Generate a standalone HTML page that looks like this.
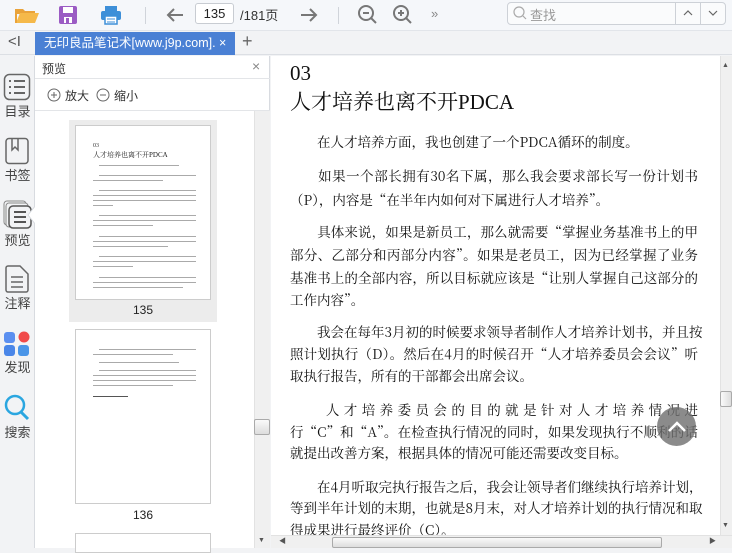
<!DOCTYPE html>
<html><head><meta charset="utf-8"><style>
*{margin:0;padding:0;box-sizing:border-box}
body{width:732px;height:548px;overflow:hidden;background:#f2f3f5;font-family:"Liberation Sans","Noto Sans CJK SC",sans-serif;position:relative}
.a{position:absolute}
.l{position:absolute;left:290px;width:408px;height:22px;line-height:22px;font-family:"Noto Serif CJK SC","Liberation Serif",serif;font-size:13.5px;color:#111;white-space:nowrap}
.j{text-align:justify;text-align-last:justify}
.lab{position:absolute;left:0;width:35px;text-align:center;font-size:13px;color:#444}
.tb{position:absolute;background:#aaa;height:1px}
</style></head><body>
<!-- toolbar -->
<div class="a" style="left:0;top:0;width:732px;height:31px;background:#f5f7fa;border-bottom:1px solid #e2e5ea"></div>
<svg class="a" style="left:14px;top:4px" width="26" height="22"><path d="M2 5h7l2 2h10v3H2z" fill="#e9a33a"/><path d="M2 19l4-10h19l-4 10z" fill="#f5b94a"/><path d="M2 5v14" stroke="#e9a33a" stroke-width="2"/></svg>
<svg class="a" style="left:57px;top:4px" width="22" height="22"><rect x="2" y="2" width="18" height="18" rx="2" fill="#9b5cc4"/><rect x="6" y="3" width="10" height="6" fill="#fff"/><rect x="7" y="13" width="8" height="6" fill="#fff"/><rect x="9" y="14" width="3" height="5" fill="#9b5cc4"/></svg>
<svg class="a" style="left:99px;top:4px" width="24" height="22"><rect x="6" y="2" width="12" height="5" fill="#3d8fd8"/><rect x="2" y="7" width="20" height="9" rx="2" fill="#3d8fd8"/><rect x="6" y="12" width="12" height="8" fill="#fff" stroke="#3d8fd8" stroke-width="1.5"/><line x1="8" y1="15" x2="16" y2="15" stroke="#3d8fd8"/><line x1="8" y1="18" x2="16" y2="18" stroke="#3d8fd8"/></svg>
<div class="a" style="left:145px;top:7px;width:1px;height:17px;background:#d0d4da"></div>
<svg class="a" style="left:164px;top:4px" width="22" height="22"><path d="M19 11H4M10 5l-6 6 6 6" stroke="#777" stroke-width="2" fill="none"/></svg>
<div class="a" style="left:195px;top:3px;width:39px;height:21px;border:1px solid #c8ccd2;border-radius:3px;background:#fff;font-size:13px;line-height:19px;text-align:center;color:#222">135</div>
<div class="a" style="left:240px;top:5px;font-size:13px;color:#333">/181页</div>
<svg class="a" style="left:298px;top:4px" width="22" height="22"><path d="M3 11h15M12 5l6 6-6 6" stroke="#777" stroke-width="2" fill="none"/></svg>
<div class="a" style="left:338px;top:7px;width:1px;height:17px;background:#d0d4da"></div>
<svg class="a" style="left:356px;top:3px" width="24" height="24"><circle cx="10" cy="10" r="7" stroke="#777" stroke-width="2" fill="none"/><path d="M15 15l5 5M7 10h6" stroke="#777" stroke-width="2"/></svg>
<svg class="a" style="left:391px;top:3px" width="24" height="24"><circle cx="10" cy="10" r="7" stroke="#777" stroke-width="2" fill="none"/><path d="M15 15l5 5M7 10h6M10 7v6" stroke="#777" stroke-width="2"/></svg>
<div class="a" style="left:431px;top:6px;font-size:13px;color:#888">»</div>
<div class="a" style="left:507px;top:2px;width:219px;height:23px;border:1px solid #cdd1d7;border-radius:4px;background:#fafbfc"></div>
<svg class="a" style="left:512px;top:5px" width="16" height="16"><circle cx="7" cy="7" r="5" stroke="#aaa" fill="none" stroke-width="1.2"/><path d="M11 11l3 3" stroke="#aaa" stroke-width="1.2"/></svg>
<div class="a" style="left:530px;top:5px;font-size:13px;color:#999">查找</div>
<div class="a" style="left:675px;top:2px;width:1px;height:23px;background:#cdd1d7"></div>
<div class="a" style="left:700px;top:2px;width:1px;height:23px;background:#cdd1d7"></div>
<svg class="a" style="left:682px;top:9px" width="12" height="8"><path d="M2 6l4-4 4 4" stroke="#666" fill="none" stroke-width="1.2"/></svg>
<svg class="a" style="left:707px;top:9px" width="12" height="8"><path d="M2 2l4 4 4-4" stroke="#666" fill="none" stroke-width="1.2"/></svg>
<!-- tab bar -->
<div class="a" style="left:0;top:31px;width:732px;height:24px;background:#f2f3f5;border-bottom:1px solid #dcdfe4"></div>
<div class="a" style="left:8px;top:33px;font-size:15px;color:#555">&lt;I</div>
<div class="a" style="left:35px;top:32px;width:200px;height:23px;background:#4a80d4;color:#fff;font-size:12.5px;line-height:23px;padding-left:9px;white-space:nowrap;overflow:hidden">无印良品笔记术[www.j9p.com]. ×</div>
<div class="a" style="left:242px;top:31px;font-size:18px;color:#666">+</div>
<!-- left icon bar -->
<div class="a" style="left:0;top:56px;width:35px;height:492px;background:#f2f3f5;border-right:1px solid #d8dbe0"></div>
<svg class="a" style="left:3px;top:73px" width="28" height="28"><rect x="1.5" y="1.5" width="25" height="25" rx="5" stroke="#666" fill="none" stroke-width="1.5"/><path d="M6 8h2M11 8h11M6 14h2M11 14h11M6 20h2M11 20h11" stroke="#666" stroke-width="2"/></svg>
<div class="lab" style="top:101px">目录</div>
<svg class="a" style="left:3px;top:137px" width="28" height="28"><rect x="3" y="1.5" width="22" height="25" rx="3" stroke="#666" fill="none" stroke-width="1.5"/><path d="M9 2v11l3-3 3 3V2" stroke="#666" fill="none" stroke-width="1.5"/></svg>
<div class="lab" style="top:165px">书签</div>
<svg class="a" style="left:3px;top:200px" width="30" height="30"><rect x="1" y="1" width="22" height="24" rx="3" stroke="#888" fill="none"/><rect x="3" y="3" width="22" height="24" rx="3" stroke="#888" fill="#f2f3f5"/><rect x="6" y="6" width="22" height="22" rx="4" stroke="#555" fill="#f2f3f5" stroke-width="1.5"/><path d="M11 12h12M11 17h12M11 22h12" stroke="#555" stroke-width="2"/></svg>
<div class="lab" style="top:230px">预览</div>
<svg class="a" style="left:26px;top:205px" width="10" height="20"><path d="M10 0L2 10l8 10" fill="#fff" stroke="#d8dbe0"/></svg>
<svg class="a" style="left:4px;top:265px" width="26" height="28"><path d="M2 3a2 2 0 0 1 2-2h12l8 8v16a2 2 0 0 1-2 2H4a2 2 0 0 1-2-2z" stroke="#666" fill="none" stroke-width="1.5"/><path d="M7 12h12M7 17h12M7 22h12" stroke="#666" stroke-width="1.5"/></svg>
<div class="lab" style="top:293px">注释</div>
<svg class="a" style="left:3px;top:329px" width="28" height="28"><rect x="1" y="3" width="11" height="11" rx="3" fill="#5b8ff0"/><circle cx="21" cy="8" r="5.5" fill="#f04a4a"/><rect x="1" y="16" width="11" height="11" rx="3" fill="#4a86e8"/><rect x="15" y="16" width="11" height="11" rx="3" fill="#4a95e8"/></svg>
<div class="lab" style="top:357px">发现</div>
<svg class="a" style="left:3px;top:394px" width="28" height="28"><circle cx="12" cy="11" r="9" stroke="#2aa6e0" fill="none" stroke-width="2.5"/><path d="M18 18l7 7" stroke="#2aa6e0" stroke-width="3"/></svg>
<div class="lab" style="top:422px">搜索</div>
<!-- preview panel -->
<div class="a" style="left:35px;top:56px;width:235px;height:492px;background:#fff;border-right:1px solid #d8dbe0"></div>
<div class="a" style="left:35px;top:56px;width:235px;height:23px;border-bottom:1px solid #e3e5e8"></div>
<div class="a" style="left:42px;top:60px;font-size:12px;color:#333">预览</div>
<div class="a" style="left:252px;top:58px;font-size:14px;color:#888">×</div>
<svg class="a" style="left:47px;top:88px" width="14" height="14"><circle cx="7" cy="7" r="6" stroke="#666" fill="none"/><path d="M4 7h6M7 4v6" stroke="#666"/></svg>
<div class="a" style="left:65px;top:87px;font-size:12px;color:#333">放大</div>
<svg class="a" style="left:96px;top:88px" width="14" height="14"><circle cx="7" cy="7" r="6" stroke="#666" fill="none"/><path d="M4 7h6" stroke="#666"/></svg>
<div class="a" style="left:114px;top:87px;font-size:12px;color:#333">缩小</div>
<div class="a" style="left:35px;top:110px;width:235px;height:1px;background:#e3e5e8"></div>
<div class="a" style="left:69px;top:120px;width:148px;height:202px;background:#ececec"></div>
<div class="a" style="left:75px;top:125px;width:136px;height:175px;background:#fff;border:1px solid #ccc"></div>
<div class="a" style="left:93px;top:143px;font-size:6px;color:#333;font-family:'Liberation Serif',serif">03</div>
<div class="a" style="left:93px;top:150px;font-size:7px;color:#222;font-family:'Liberation Serif','Noto Serif CJK SC',serif;white-space:nowrap">人才培养也离不开PDCA</div>
<div class="tb" style="left:99px;top:165px;width:80px"></div>
<div class="tb" style="left:99px;top:175px;width:97px"></div><div class="tb" style="left:93px;top:180px;width:70px"></div>
<div class="tb" style="left:99px;top:190px;width:97px"></div><div class="tb" style="left:93px;top:195px;width:103px"></div><div class="tb" style="left:93px;top:200px;width:103px"></div><div class="tb" style="left:93px;top:205px;width:20px"></div>
<div class="tb" style="left:99px;top:215px;width:97px"></div><div class="tb" style="left:93px;top:220px;width:103px"></div><div class="tb" style="left:93px;top:225px;width:60px"></div>
<div class="tb" style="left:99px;top:236px;width:97px"></div><div class="tb" style="left:93px;top:241px;width:103px"></div><div class="tb" style="left:93px;top:246px;width:75px"></div>
<div class="tb" style="left:99px;top:256px;width:97px"></div><div class="tb" style="left:93px;top:261px;width:103px"></div><div class="tb" style="left:93px;top:266px;width:40px"></div>
<div class="tb" style="left:99px;top:277px;width:97px"></div><div class="tb" style="left:93px;top:282px;width:103px"></div><div class="tb" style="left:93px;top:287px;width:90px"></div>
<div class="a" style="left:69px;top:303px;width:148px;text-align:center;font-size:12px;color:#222">135</div>
<div class="a" style="left:75px;top:329px;width:136px;height:175px;background:#fff;border:1px solid #ccc"></div>
<div class="tb" style="left:99px;top:349px;width:97px"></div><div class="tb" style="left:93px;top:354px;width:80px"></div>
<div class="tb" style="left:99px;top:362px;width:80px"></div>
<div class="tb" style="left:99px;top:370px;width:97px"></div><div class="tb" style="left:93px;top:375px;width:103px"></div><div class="tb" style="left:93px;top:380px;width:103px"></div><div class="tb" style="left:93px;top:385px;width:80px"></div>
<div class="tb" style="left:93px;top:396px;width:35px;background:#555"></div>
<div class="a" style="left:69px;top:508px;width:148px;text-align:center;font-size:12px;color:#222">136</div>
<div class="a" style="left:75px;top:533px;width:136px;height:20px;background:#fff;border:1px solid #ccc"></div>
<div class="a" style="left:254px;top:111px;width:16px;height:437px;background:#f0f0f0;border-left:1px solid #e2e2e2"></div>
<div class="a" style="left:254px;top:419px;width:16px;height:16px;background:linear-gradient(#fafafa,#ddd);border:1px solid #aaa;border-radius:2px"></div>
<!-- content -->
<div class="a" style="left:271px;top:56px;width:449px;height:479px;background:#fff"></div>
<div class="a" style="left:290px;top:61px;font-size:21px;font-family:'Liberation Serif',serif;color:#111">03</div>
<div class="a" style="left:290px;top:86px;font-size:21px;font-family:'Liberation Serif','Noto Serif CJK SC',serif;color:#111;white-space:nowrap">人才培养也离不开PDCA</div>
<div class="l" style="top:130px">　　在人才培养方面，我也创建了一个PDCA循环的制度。</div>
<div class="l j" style="top:164px">　　如果一个部长拥有30名下属，那么我会要求部长写一份计划书</div>
<div class="l" style="top:188px">（P），内容是“在半年内如何对下属进行人才培养”。</div>
<div class="l j" style="top:220px">　　具体来说，如果是新员工，那么就需要“掌握业务基准书上的甲</div>
<div class="l j" style="top:243px">部分、乙部分和丙部分内容”。如果是老员工，因为已经掌握了业务</div>
<div class="l j" style="top:266px">基准书上的全部内容，所以目标就应该是“让别人掌握自己这部分的</div>
<div class="l" style="top:288px">工作内容”。</div>
<div class="l j" style="top:320px">　　我会在每年3月初的时候要求领导者制作人才培养计划书，并且按</div>
<div class="l j" style="top:342px">照计划执行（D）。然后在4月的时候召开“人才培养委员会会议”听</div>
<div class="l" style="top:364px">取执行报告，所有的干部都会出席会议。</div>
<div class="l j" style="top:398px">　　人才培养委员会的目的就是针对人才培养情况进</div>
<div class="l j" style="top:420px">行“C”和“A”。在检查执行情况的同时，如果发现执行不顺利的话</div>
<div class="l" style="top:441px">就提出改善方案，根据具体的情况可能还需要改变目标。</div>
<div class="l j" style="top:475px">　　在4月听取完执行报告之后，我会让领导者们继续执行培养计划，</div>
<div class="l j" style="top:496px">等到半年计划的末期，也就是8月末，对人才培养计划的执行情况和取</div>
<div class="l" style="top:518px">得成果进行最终评价（C）。</div>
<div class="a" style="left:657px;top:407px;width:39px;height:39px;border-radius:50%;background:rgba(110,110,110,.8)"></div>
<svg class="a" style="left:664px;top:414px" width="26" height="26"><path d="M5 17l8-8 8 8" stroke="#fff" stroke-width="2.5" fill="none"/></svg>
<!-- right scrollbar -->
<div class="a" style="left:720px;top:56px;width:12px;height:479px;background:#f0f0f0;border-left:1px solid #e2e2e2"></div>
<div class="a" style="left:722px;top:62px;font-size:7px;color:#555">▲</div>
<div class="a" style="left:720px;top:391px;width:12px;height:16px;background:linear-gradient(90deg,#fafafa,#ddd);border:1px solid #aaa;border-radius:2px"></div>
<div class="a" style="left:722px;top:522px;font-size:7px;color:#555">▼</div>
<!-- bottom scrollbar -->
<div class="a" style="left:271px;top:535px;width:461px;height:13px;background:#f0f0f0;border-top:1px solid #e2e2e2"></div>
<div class="a" style="left:279px;top:536px;font-size:7px;color:#555">◀</div>
<div class="a" style="left:332px;top:537px;width:330px;height:11px;background:linear-gradient(#fafafa,#ddd);border:1px solid #aaa;border-radius:2px"></div>
<div class="a" style="left:709px;top:536px;font-size:7px;color:#555">▶</div>
<div class="a" style="left:258px;top:537px;font-size:7px;color:#555">▼</div>
</body></html>
